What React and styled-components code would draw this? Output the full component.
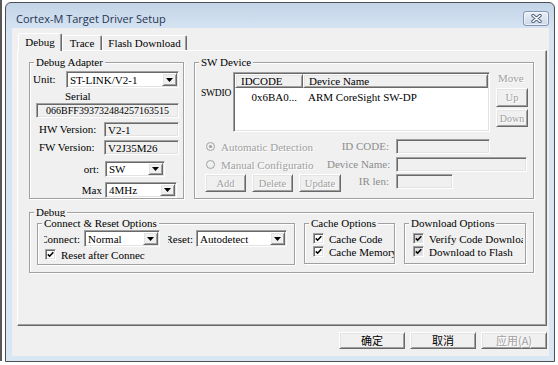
import React from "react";
import styled, { createGlobalStyle, css } from "styled-components";

const GlobalStyle = createGlobalStyle`
  html, body { margin: 0; padding: 0; background: #fff; }
  *, *::before, *::after { box-sizing: border-box; }
  body {
    font-family: "Liberation Serif", "Noto Sans CJK SC", serif;
    font-size: 11px;
    color: #000;
  }
`;

const sunken = css`
  border: 1px solid;
  border-color: #a0a0a0 #fff #fff #a0a0a0;
  box-shadow: inset 1px 1px 0 #696969, inset -1px -1px 0 #e3e3e3;
`;
const raised = css`
  border: 1px solid;
  border-color: #fff #696969 #696969 #fff;
  box-shadow: inset 1px 1px 0 #e3e3e3, inset -1px -1px 0 #a0a0a0;
`;

const Screen = styled.div`
  width: 558px;
  height: 365px;
  display: flex;
  align-items: flex-start;
  overflow: hidden;
  background: #fff;
`;
const BackEdge = styled.div`
  width: 2px;
  height: 361px;
  background: #585858;
  margin-right: 3px;
  flex-shrink: 0;
`;
const Window = styled.div`
  margin-top: 2px;
  width: 550px;
  height: 360px;
  flex-shrink: 0;
  border: 1px solid #4f4f4f;
  border-radius: 6px 6px 0 0;
  background: linear-gradient(#c3d4e8, #d6e3f1 26px, #d9e6f3);
  padding: 0 5px 5px 6px;
  display: flex;
  flex-direction: column;
`;
const TitleBar = styled.div`
  height: 25px;
  display: flex;
  align-items: flex-start;
  justify-content: space-between;
  padding-left: 4px;
`;
const Title = styled.div`
  margin-top: 8px;
  font-family: "Open Sans", "Noto Sans", sans-serif;
  font-size: 11px;
  line-height: 16px;
  color: #1e3553;
  white-space: nowrap;
`;
const CloseButton = styled.div`
  margin-top: 8px;
  width: 26px;
  height: 15px;
  border: 1px solid #8296b1;
  border-radius: 3px;
  background: linear-gradient(#e9f0f8, #cbd8e9);
  box-shadow: inset 0 0 0 1px rgba(255, 255, 255, 0.6);
  display: flex;
  align-items: center;
  justify-content: center;
`;
const Client = styled.div`
  height: 328px;
  background: #f0f0f0;
  padding: 5px 2px 0 5px;
  display: flex;
  flex-direction: column;
`;
const TabStrip = styled.div`
  display: flex;
  align-items: flex-end;
  height: 18px;
  padding-left: 1px;
  margin-bottom: -1px;
  position: relative;
  z-index: 1;
`;
const Tab = styled.div`
  width: ${(p) => p.$w}px;
  height: ${(p) => (p.$active ? 18 : 15)}px;
  margin-bottom: ${(p) => (p.$active ? 0 : 1)}px;
  border: 1px solid;
  border-bottom: none;
  border-color: #fff #696969 transparent #fff;
  box-shadow: inset -1px 0 0 #a0a0a0;
  border-radius: 2px 2px 0 0;
  background: #f0f0f0;
  text-align: center;
  line-height: ${(p) => (p.$active ? 17 : 14)}px;
  white-space: nowrap;
`;
const Panel = styled.div`
  width: 530px;
  height: 276px;
  flex-shrink: 0;
  border: 1px solid;
  border-color: #fff #696969 #696969 #fff;
  box-shadow: inset -1px -1px 0 #a0a0a0;
  background: #f0f0f0;
  padding: 11px 12px 0 11px;
`;
const TopRow = styled.div`
  display: flex;
  gap: 10px;
`;
const Group = styled.div`
  position: relative;
  width: ${(p) => p.$w}px;
  height: ${(p) => p.$h}px;
  margin-top: ${(p) => p.$mt || 0}px;
  flex-shrink: 0;
  border: 1px solid #a0a0a0;
  box-shadow: inset 1px 1px 0 #fff, 1px 1px 0 #fff;
`;
const Caption = styled.div`
  position: absolute;
  top: -7px;
  left: 4px;
  padding: 0 2px;
  line-height: 13px;
  background: #f0f0f0;
  white-space: nowrap;
`;
const AdapterBody = styled.div`
  display: flex;
  flex-direction: column;
  align-items: flex-start;
  padding: 8px 0 0 3px;
`;
const Row = styled.div`
  display: flex;
  align-items: center;
  margin-top: ${(p) => p.$mt || 0}px;
`;
const Label = styled.div`
  width: ${(p) => p.$w}px;
  padding-left: ${(p) => p.$pl || 0}px;
  padding-right: ${(p) => p.$pr || 0}px;
  text-align: ${(p) => p.$align || "left"};
  white-space: nowrap;
  flex-shrink: 0;
  line-height: 13px;
`;
const SerialLabel = styled.div`
  margin: 2px 0 0 32px;
  line-height: 13px;
`;
const Field = styled.div`
  ${sunken};
  width: ${(p) => p.$w}px;
  height: ${(p) => p.$h || 15}px;
  margin-left: ${(p) => p.$ml || 0}px;
  background: #f0f0f0;
  display: flex;
  align-items: center;
  justify-content: ${(p) => (p.$center ? "center" : "flex-start")};
  padding: 0 3px;
  font-size: ${(p) => p.$fs || 11}px;
  white-space: nowrap;
  overflow: hidden;
  flex-shrink: 0;
`;
const SelectBox = styled.div`
  ${sunken};
  width: ${(p) => p.$w}px;
  height: ${(p) => p.$h || 17}px;
  background: #fff;
  display: flex;
  align-items: stretch;
  padding: 1px;
  flex-shrink: 0;
`;
const SelectText = styled.div`
  flex: 1;
  padding-left: 2px;
  display: flex;
  align-items: center;
  white-space: nowrap;
  overflow: hidden;
`;
const DropButton = styled.div`
  ${raised};
  width: 15px;
  background: #f0f0f0;
  display: flex;
  align-items: center;
  justify-content: center;
`;

const SWBody = styled.div`
  display: flex;
  flex-direction: column;
  padding: 9px 0 0 6px;
`;
const SWTop = styled.div`
  display: flex;
  align-items: flex-start;
`;
const PortName = styled.div`
  width: 32px;
  margin-top: 15px;
  line-height: 13px;
  font-size: 9.5px;
  letter-spacing: -0.2px;
  white-space: nowrap;
`;
const Table = styled.div`
  ${sunken};
  width: 257px;
  height: 60px;
  background: #fff;
  padding: 1px;
  display: flex;
  flex-direction: column;
`;
const HeadRow = styled.div`
  display: flex;
  height: 14px;
`;
const HeadCell = styled.div`
  ${raised};
  width: ${(p) => (p.$w ? `${p.$w}px` : "auto")};
  flex: ${(p) => (p.$w ? "none" : 1)};
  background: #f0f0f0;
  padding-left: 5px;
  line-height: 12px;
  white-space: nowrap;
`;
const DataRow = styled.div`
  display: flex;
  margin-top: 1px;
  height: 15px;
  align-items: center;
`;
const Cell = styled.div`
  width: ${(p) => (p.$w ? `${p.$w}px` : "auto")};
  flex: ${(p) => (p.$w ? "none" : 1)};
  text-align: ${(p) => p.$align || "left"};
  padding: 0 6px 0 5px;
  white-space: nowrap;
`;
const MoveCol = styled.div`
  margin-left: 6px;
  width: 32px;
  display: flex;
  flex-direction: column;
`;
const MoveLabel = styled.div`
  line-height: 13px;
  padding-left: 2px;
  color: #a0a0a0;
  text-shadow: 1px 1px 0 #fff;
`;
const WinButton = styled.div`
  ${raised};
  width: ${(p) => (p.$w ? `${p.$w}px` : "auto")};
  height: ${(p) => p.$h || 18}px;
  margin-top: ${(p) => p.$mt || 0}px;
  background: #f0f0f0;
  display: flex;
  align-items: center;
  justify-content: center;
  white-space: nowrap;
  flex-shrink: 0;
  font-size: ${(p) => p.$fs || 10.5}px;
  color: ${(p) => (p.$disabled ? "#a0a0a0" : "#000")};
  text-shadow: ${(p) => (p.$disabled ? "1px 1px 0 #fff" : "none")};
`;
const SWBottom = styled.div`
  display: grid;
  grid-template-columns: 122px 69px auto;
  grid-template-rows: 17px 19px 18px;
  align-items: center;
  margin-top: 6px;
  padding-left: 4px;
`;
const RadioRow = styled.div`
  display: flex;
  align-items: center;
  gap: 6px;
  width: 109px;
  padding-left: 1px;
  overflow: hidden;
  white-space: nowrap;
  color: #a0a0a0;
  text-shadow: 1px 1px 0 #fff;
`;
const SideLabel = styled.div`
  text-align: right;
  padding-right: 7px;
  white-space: nowrap;
  color: #8c8c8c;
  align-self: ${(p) => p.$self || "center"};
  line-height: 15px;
`;
const GridField = styled(Field)`
  align-self: ${(p) => p.$self || "center"};
`;
const ButtonRow = styled.div`
  display: flex;
  gap: 6px;
  align-self: stretch;
`;

const DebugBody = styled.div`
  display: flex;
  gap: 9px;
  padding: 10px 0 0 7px;
`;
const ConnectBody = styled.div`
  display: flex;
  flex-direction: column;
  padding: 6px 0 0 6px;
`;
const ClipLabel = styled.div`
  width: ${(p) => p.$w}px;
  margin-left: ${(p) => p.$ml || 0}px;
  margin-right: ${(p) => p.$mr || 0}px;
  display: flex;
  justify-content: flex-end;
  overflow: hidden;
  white-space: nowrap;
  flex-shrink: 0;
`;
const OptionsBody = styled.div`
  display: flex;
  flex-direction: column;
  padding: 8px 0 0 8px;
`;
const CheckRow = styled.div`
  display: flex;
  align-items: center;
  gap: 5px;
  height: ${(p) => p.$h || 13}px;
  width: ${(p) => (p.$w ? `${p.$w}px` : "auto")};
  margin-top: ${(p) => p.$mt || 0}px;
  padding-left: ${(p) => p.$pl || 0}px;
  overflow: hidden;
  white-space: nowrap;
`;
const CheckBox = styled.div`
  ${sunken};
  width: 11px;
  height: 11px;
  flex-shrink: 0;
  background: ${(p) => (p.$gray ? "#dedede" : "#fff")};
  display: flex;
  align-items: center;
  justify-content: center;
`;
const ButtonBar = styled.div`
  display: flex;
  justify-content: flex-end;
  gap: 5px;
  margin-top: 6px;
`;
const DialogButton = styled(WinButton)`
  font-family: "Noto Sans CJK SC", sans-serif;
  font-size: 11px;
  line-height: 1;
`;

const Arrow = () => (
  <svg width="7" height="4" viewBox="0 0 7 4">
    <path d="M0 0H7L3.5 4Z" fill="#000" />
  </svg>
);

const Check = () => (
  <svg width="7" height="7" viewBox="0 0 7 7">
    <path d="M0.8 3.4L2.6 5.2L6.3 1.2" fill="none" stroke="#000" strokeWidth="1.6" />
  </svg>
);

const Radio = ({ on }) => (
  <svg width="9" height="9" viewBox="0 0 9 9" style={{ flexShrink: 0 }}>
    <circle cx="4.5" cy="4.5" r="4" fill="#f0f0f0" stroke="#a0a0a0" />
    {on && <circle cx="4.5" cy="4.5" r="1.6" fill="#a0a0a0" />}
  </svg>
);

const Select = ({ w, h, children }) => (
  <SelectBox $w={w} $h={h}>
    <SelectText>{children}</SelectText>
    <DropButton>
      <Arrow />
    </DropButton>
  </SelectBox>
);

const Option = ({ gray, children, ...rest }) => (
  <CheckRow {...rest}>
    <CheckBox $gray={gray}>
      <Check />
    </CheckBox>
    {children}
  </CheckRow>
);

export default function App() {
  return (
    <>
      <GlobalStyle />
      <Screen>
        <BackEdge />
        <Window>
          <TitleBar>
            <Title>Cortex-M Target Driver Setup</Title>
            <CloseButton>
              <svg width="11" height="9" viewBox="0 0 11 9">
                <path d="M2 1.5L9 7.5M9 1.5L2 7.5" stroke="#4b5d76" strokeWidth="3.4" strokeLinecap="round" />
                <path d="M2 1.5L9 7.5M9 1.5L2 7.5" stroke="#fff" strokeWidth="1.6" strokeLinecap="round" />
              </svg>
            </CloseButton>
          </TitleBar>
          <Client>
            <TabStrip>
              <Tab $w={44} $active>Debug</Tab>
              <Tab $w={40}>Trace</Tab>
              <Tab $w={85}>Flash Download</Tab>
            </TabStrip>
            <Panel>
              <TopRow>
                <Group $w={155} $h={137}>
                  <Caption>Debug Adapter</Caption>
                  <AdapterBody>
                    <Row>
                      <Label $w={33}>Unit:</Label>
                      <Select w={113}>ST-LINK/V2-1</Select>
                    </Row>
                    <SerialLabel>Serial</SerialLabel>
                    <Field $w={143} $ml={3} $fs={10} $center>
                      066BFF393732484257163515
                    </Field>
                    <Row $mt={4}>
                      <Label $w={71} $pl={6}>HW Version:</Label>
                      <Field $w={75}>V2-1</Field>
                    </Row>
                    <Row $mt={3}>
                      <Label $w={71} $pl={6}>FW Version:</Label>
                      <Field $w={75}>V2J35M26</Field>
                    </Row>
                    <Row $mt={6}>
                      <Label $w={72} $pr={6} $align="right">ort:</Label>
                      <Select w={60} h={16}>SW</Select>
                    </Row>
                    <Row $mt={5}>
                      <Label $w={72} $pr={3} $align="right">Max</Label>
                      <Select w={72} h={16}>4MHz</Select>
                    </Row>
                  </AdapterBody>
                </Group>
                <Group $w={340} $h={137}>
                  <Caption>SW Device</Caption>
                  <SWBody>
                    <SWTop>
                      <PortName>SWDIO</PortName>
                      <Table>
                        <HeadRow>
                          <HeadCell $w={68}>IDCODE</HeadCell>
                          <HeadCell>Device Name</HeadCell>
                        </HeadRow>
                        <DataRow>
                          <Cell $w={68} $align="right">0x6BA0...</Cell>
                          <Cell>ARM CoreSight SW-DP</Cell>
                        </DataRow>
                      </Table>
                      <MoveCol>
                        <MoveLabel>Move</MoveLabel>
                        <WinButton $mt={3} $h={19} $disabled>Up</WinButton>
                        <WinButton $mt={2} $h={18} $fs={10} $disabled>Down</WinButton>
                      </MoveCol>
                    </SWTop>
                    <SWBottom>
                      <RadioRow>
                        <Radio on />
                        Automatic Detection
                      </RadioRow>
                      <SideLabel>ID CODE:</SideLabel>
                      <GridField $w={94} $h={15} />
                      <RadioRow>
                        <Radio />
                        Manual Configuration
                      </RadioRow>
                      <SideLabel>Device Name:</SideLabel>
                      <GridField $w={131} $h={15} />
                      <ButtonRow>
                        <WinButton $w={41} $disabled>Add</WinButton>
                        <WinButton $w={41} $disabled>Delete</WinButton>
                        <WinButton $w={42} $disabled>Update</WinButton>
                      </ButtonRow>
                      <SideLabel $self="start">IR len:</SideLabel>
                      <GridField $w={57} $h={15} $self="start" />
                    </SWBottom>
                  </SWBody>
                </Group>
              </TopRow>
              <Group $w={505} $h={61} $mt={13}>
                <Caption>Debug</Caption>
                <DebugBody>
                  <Group $w={258} $h={42}>
                    <Caption>Connect &amp; Reset Options</Caption>
                    <ConnectBody>
                      <Row>
                        <ClipLabel $w={36} $mr={4}>Connect:</ClipLabel>
                        <Select w={76}>Normal</Select>
                        <ClipLabel $w={25} $ml={8} $mr={3}>Reset:</ClipLabel>
                        <Select w={91}>Autodetect</Select>
                      </Row>
                      <Option $mt={2} $pl={1} $w={101} $h={11}>
                        Reset after Connect
                      </Option>
                    </ConnectBody>
                  </Group>
                  <Group $w={91} $h={41}>
                    <Caption>Cache Options</Caption>
                    <OptionsBody>
                      <Option>Cache Code</Option>
                      <Option>Cache Memory</Option>
                    </OptionsBody>
                  </Group>
                  <Group $w={122} $h={41}>
                    <Caption>Download Options</Caption>
                    <OptionsBody>
                      <Option gray $w={110}>Verify Code Download</Option>
                      <Option gray $w={110}>Download to Flash</Option>
                    </OptionsBody>
                  </Group>
                </DebugBody>
              </Group>
            </Panel>
            <ButtonBar>
              <DialogButton $w={66} $h={17}>确定</DialogButton>
              <DialogButton $w={66} $h={17}>取消</DialogButton>
              <DialogButton $w={66} $h={17} $disabled>应用(A)</DialogButton>
            </ButtonBar>
          </Client>
        </Window>
      </Screen>
    </>
  );
}
